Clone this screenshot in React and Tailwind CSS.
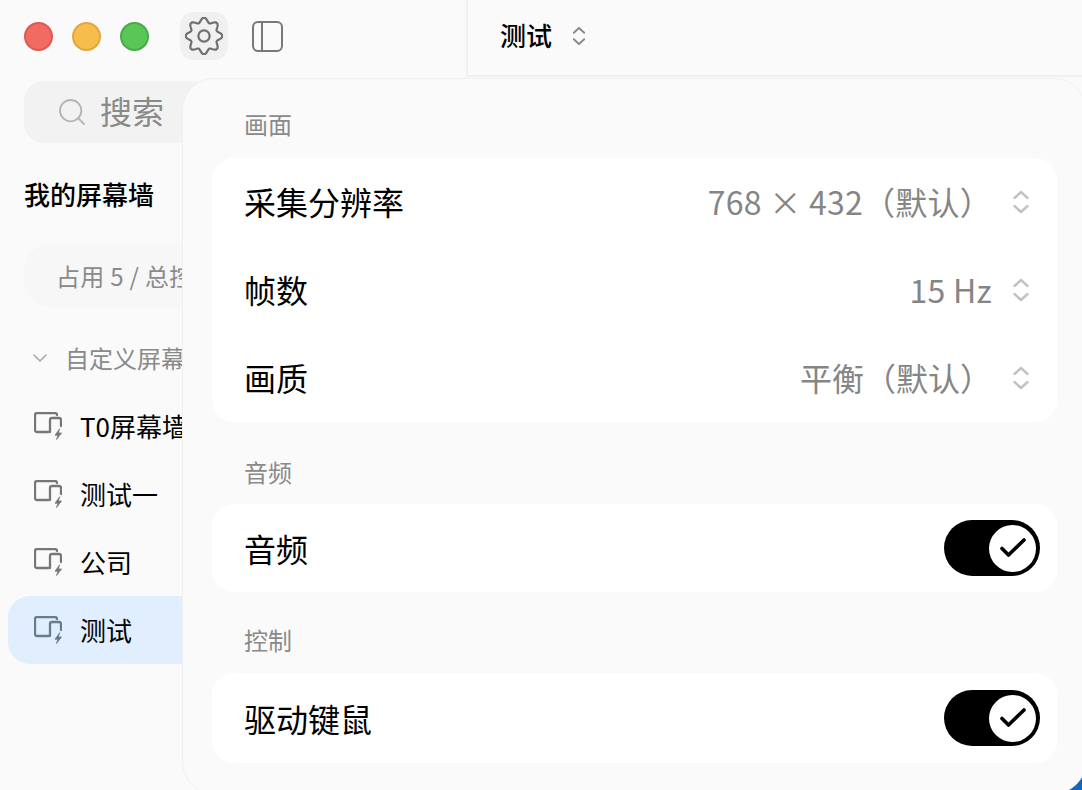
import { ChevronDown, Search } from "lucide-react";

const FONT = "font-['Noto_Sans_CJK_SC','Noto_Sans',sans-serif]";

// wavy 8 lobe outline of the settings gear
const gearPath = () => {
  const pts = [];
  for (let i = 0; i < 160; i++) {
    const t = (i / 160) * Math.PI * 2 - Math.PI / 2;
    const r = 16 + 2.3 * Math.cos(8 * t);
    pts.push(`${(19 + r * Math.cos(t)).toFixed(2)} ${(19 + r * Math.sin(t)).toFixed(2)}`);
  }
  return `M${pts.join("L")}Z`;
};

const UpDown = ({ className }) => (
  <svg width="18" height="26" viewBox="0 0 18 26" fill="none" stroke="currentColor" strokeWidth="2.4" strokeLinecap="round" strokeLinejoin="round" className={className}>
    <path d="M2.5 9 9 3l6.5 6" />
    <path d="M2.5 17 9 23l6.5-6" />
  </svg>
);

const GearIcon = () => (
  <svg width="38" height="38" viewBox="0 0 38 38" fill="none" stroke="#6f6f6f" strokeWidth="2.2" strokeLinejoin="round">
    <path d={gearPath()} />
    <circle cx="19" cy="19" r="5.6" />
  </svg>
);

const ScreenIcon = ({ color = "#777777" }) => (
  <svg width="28" height="28" viewBox="0 0 28 28" fill="none" stroke={color} strokeWidth="2.3" strokeLinecap="round" strokeLinejoin="round">
    <path d="M14.5 20H3a2 2 0 0 1-2-2V3a2 2 0 0 1 2-2h18a2 2 0 0 1 2 2" />
    <path d="M16 20V8a2 2 0 0 1 2-2h7a2 2 0 0 1 2 2v6" />
    <path fill={color} strokeWidth="0.8" d="M25.5 17 21 23.200h3L22.500 27.500l5-6.500h-3z" />
  </svg>
);

const Row = ({ label, value, wide }) => (
  <div className="flex h-[88px] items-center pl-[32px] pr-[27px]">
    <span className="pb-[2px] text-[32px] text-black">{label}</span>
    <span className={`ml-auto pb-[2px] text-[32px] text-[#858585] ${wide ? "tracking-[0.25px]" : ""}`}>{value}</span>
    <UpDown className="ml-[20px] text-[#c2c2c2]" />
  </div>
);

const Toggle = () => (
  <div className="ml-auto flex h-[56px] w-[96px] items-center justify-end rounded-full bg-black pr-[4px]">
    <div className="flex h-[47px] w-[47px] items-center justify-center rounded-full bg-white">
      <svg width="28" height="24" viewBox="0 0 28 24" fill="none" stroke="black" strokeWidth="3.6" strokeLinecap="round" strokeLinejoin="round">
        <path d="M3 12.500 9.500 19 25 4" />
      </svg>
    </div>
  </div>
);

const ToggleRow = ({ label, className }) => (
  <div className={`flex items-center rounded-[22px] bg-white pl-[32px] pr-[17px] ${className}`}>
    <span className="text-[32px] text-black">{label}</span>
    <Toggle />
  </div>
);

const SectionTitle = ({ children, className }) => (
  <div className={`pb-[1px] pl-[32px] text-[24px] leading-[31px] text-[#8a8a8a] ${className}`}>{children}</div>
);

const Wall = ({ label, active }) => (
  <div className={`flex h-[68px] items-center rounded-l-[22px] pl-[26px] ${active ? "bg-[#e0eefe]" : ""}`}>
    <ScreenIcon color={active ? "#6a7a8c" : "#777777"} />
    <span className="ml-[18px] whitespace-nowrap pb-[2px] text-[26px] text-black">{label}</span>
  </div>
);

const App = () => {
  return (
    <div className={`relative flex h-[790px] w-[1082px] overflow-hidden bg-[#fafafa] ${FONT}`}>
      <aside className="flex h-full w-[468px] shrink-0 flex-col border-r-2 border-[#f0f0f0]">
        <div className="flex h-[72px] shrink-0 items-center pl-[24px]">
          <div className="h-[29px] w-[29px] rounded-full border-2 border-[#dc5a54] bg-[#f26b63]" />
          <div className="ml-[19px] h-[29px] w-[29px] rounded-full border-2 border-[#e2a840] bg-[#f6bc4c]" />
          <div className="ml-[19px] h-[29px] w-[29px] rounded-full border-2 border-[#48ab4a] bg-[#5bc658]" />
          <div className="ml-[31px] flex h-[48px] w-[48px] items-center justify-center rounded-[14px] bg-[#f0f0f0]">
            <GearIcon />
          </div>
          <div className="ml-[24px] flex h-[31px] w-[31px] rounded-[6px] border-2 border-[#787878]">
            <div className="w-[9px] border-r-2 border-[#787878]" />
          </div>
        </div>

        <div className="flex flex-col pl-[8px]">
          <div className="ml-[16px] mt-[9px] flex h-[62px] w-[300px] items-center rounded-[20px] bg-[#f2f2f2] pl-[32px]">
            <Search size={32} strokeWidth={1.4} className="text-[#b5b5b5]" />
            <span className="ml-[12px] pb-[4px] text-[32px] leading-none text-[#8a8a8a]">搜索</span>
          </div>
          <div className="ml-[16px] mt-[33px] text-[26px] font-medium leading-[36px] text-black">我的屏幕墙</div>
          <div className="ml-[16px] mt-[31px] flex h-[65px] w-[300px] items-center rounded-[28px] bg-[#f7f7f7] pl-[32px] text-[24px] tracking-[0.3px] text-[#8a8a8a]">
            <span className="whitespace-nowrap">占用 5 / 总控 16</span>
          </div>
          <div className="mt-[32px] flex h-[36px] items-center pl-[20px]">
            <ChevronDown size={24} strokeWidth={1.6} className="text-[#a8a8a8]" />
            <span className="ml-[13px] whitespace-nowrap text-[24px] text-[#8a8a8a]">自定义屏幕墙</span>
          </div>
          <div className="mt-[16px] flex flex-col">
            <Wall label="T0屏幕墙" />
            <Wall label="测试一" />
            <Wall label="公司" />
            <Wall label="测试" active />
          </div>
        </div>
      </aside>

      <div className="flex h-[77px] flex-1 items-start border-b-2 border-[#f0f0f0] pl-[32px]">
        <div className="flex h-[72px] items-center">
          <span className="pb-[4px] text-[26px] font-medium text-black">测试</span>
          <UpDown className="ml-[18px] scale-[0.8] text-[#8a8a8a]" />
        </div>
      </div>

      {/* wallpaper peeking out behind the panel corner */}
      <div className="absolute bottom-0 right-0 h-[20px] w-[20px] bg-[#1268b8]" />

      <div className="absolute left-[182px] top-[78px] h-[716px] w-[904px] rounded-[32px] border border-[#f0f0f0] bg-[#fafafa] pl-[29px] pr-[28px] pt-[29px]">
        <SectionTitle>画面</SectionTitle>
        <div className="mt-[18px] flex flex-col rounded-[22px] bg-white">
          <Row label="采集分辨率" value="768 × 432（默认）" wide />
          <Row label="帧数" value="15 Hz" wide />
          <Row label="画质" value="平衡（默认）" />
        </div>
        <SectionTitle className="mt-[34px]">音频</SectionTitle>
        <div className="mt-[16px]">
          <ToggleRow label="音频" className="h-[88px]" />
        </div>
        <SectionTitle className="mt-[32px]">控制</SectionTitle>
        <div className="mt-[17px]">
          <ToggleRow label="驱动键鼠" className="h-[90px]" />
        </div>
      </div>
    </div>
  );
};

export default App;
